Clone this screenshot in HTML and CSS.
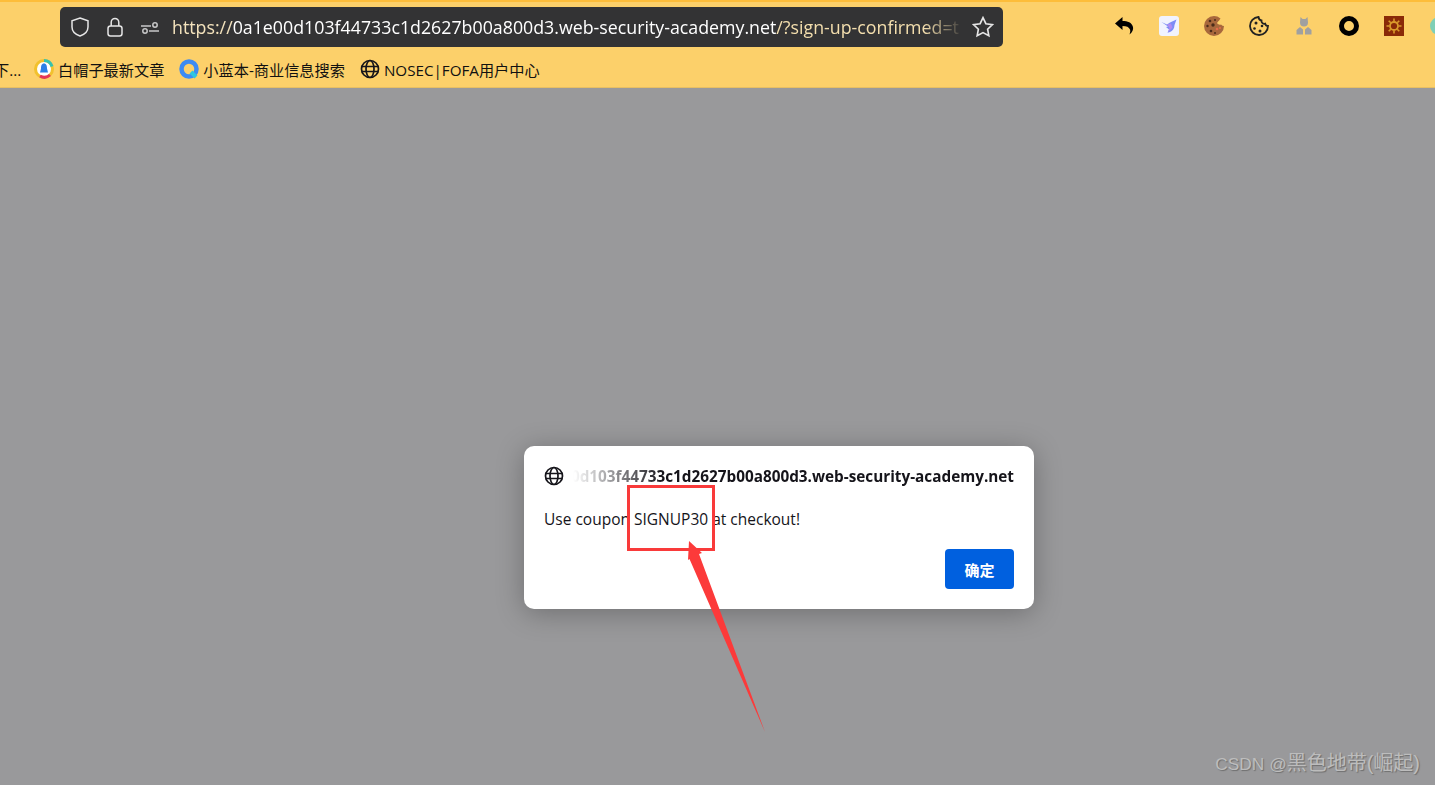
FILE: index.html
```html
<!DOCTYPE html>
<html>
<head>
    <meta charset="utf-8">
    <title>web-security-academy</title>
    <link rel="stylesheet" href="styles.css">
</head>
<body>
<div class="browser">
    <div class="toolbar">
        <div class="urlbar">
            <svg class="url-icon" viewBox="0 0 20 20"><path d="M10 1 18 3.800v6.200c0 4.300-3 7.300-8 9-5-1.700-8-4.700-8-9V3.800z"/></svg>
            <svg class="url-icon" viewBox="0 0 20 20"><rect x="3" y="9" width="14" height="10" rx="2.500"/><path d="M6.200 9V5.200a3.800 3.800 0 0 1 7.600 0V9"/></svg>
            <svg class="url-icon tune" viewBox="0 0 20 20"><circle cx="5" cy="14" r="2.200"/><path d="M9 14h10"/><circle cx="15" cy="8" r="2.200"/><path d="M1 9h10"/></svg>
            <div class="url-text"><span class="url-scheme">https://</span><span class="url-host">0a1e00d103f44733c1d2627b00a800d3.web-security-academy.net</span><span class="url-rest">/?sign-up-confirmed=t</span></div>
            <svg class="star" viewBox="0 0 20 20"><path d="M10 1.500 12.600 7l6 .8-4.400 4.200 1.100 6L10 15.100 4.700 18l1.100-6-4.400-4.200 6-.8z"/></svg>
        </div>
        <div class="extensions">
            <svg class="ext" viewBox="0 0 20 20"><path d="M8.500 1 1 7.500 8.500 14v-4c4 0 6.500 1 7.500 3.500.4 1 .4 2.500-.5 5 3-2.500 4-5 3.500-7.500C18 6.500 13.500 5 8.500 5z" fill="#000"/></svg>
            <svg class="ext" viewBox="0 0 20 20"><rect width="20" height="20" rx="3" fill="#f1f3fe"/><path d="M2.500 6 8 8.500 11 6.500 17.500 3.500 15.500 9c0 3.500-2 6-4.500 7l-2.500.8 1.500-3.300-3-2.500 2-.5z" fill="#7d8cf5"/><path d="M8 8.500 12 7.500 13.500 11.500 9 16l1.500-4z" fill="#b08cf2"/></svg>
            <svg class="ext" viewBox="0 0 20 20"><path d="M10 0a10 10 0 1 0 10 10c-1 0-2-.5-3-1.500-1.500.5-3 0-4-1.500 1.500-2 3-3.500 3.500-4.500C14.500.8 12.500 0 10 0z" fill="#a8683c"/><circle cx="6" cy="5" r="1.300" fill="#4a2c1a"/><circle cx="11" cy="4" r="1" fill="#4a2c1a"/><circle cx="3.500" cy="10" r="1.200" fill="#4a2c1a"/><circle cx="9" cy="9" r="1.700" fill="#4a2c1a"/><circle cx="13" cy="13" r="1.300" fill="#e46b4a"/><circle cx="16" cy="12" r="1" fill="#e46b4a"/><circle cx="7" cy="15" r="1.300" fill="#4a2c1a"/><circle cx="11" cy="17" r="1" fill="#4a2c1a"/></svg>
            <svg class="ext" viewBox="0 0 20 20"><path d="M9.500 1a9 9 0 1 0 9.500 9c-1.500 0-2.500-1-2.800-2.300-2.200.5-4-1-3.700-3.200C11 4.300 9.800 3 9.500 1z" fill="none" stroke="#222" stroke-width="1.800"/><circle cx="7" cy="7" r="1.500" fill="#222"/><circle cx="13" cy="10" r="1.300" fill="#222"/><circle cx="5.500" cy="12.500" r="1.300" fill="#222"/><circle cx="11" cy="15" r="1.500" fill="#222"/></svg>
            <svg class="ext" viewBox="0 0 20 20"><path d="M6.500 1 8.500 3h3l2-2 .5 5.500a4 4 0 0 1-8 0z" fill="#a0a0a0"/><path d="M2.500 18.500V14L6 11l3 2.500v5zM17.500 18.500V14L14 11l-3 2.500v5z" fill="#a0a0a0"/></svg>
            <svg class="ext" viewBox="0 0 20 20"><circle cx="10" cy="10" r="7.500" fill="none" stroke="#000" stroke-width="5"/></svg>
            <svg class="ext" viewBox="0 0 20 20"><rect width="20" height="20" fill="#8a2a08"/><circle cx="10" cy="10" r="4" fill="none" stroke="#d99a2b" stroke-width="1.800"/><path d="M10 2.500v3M10 14.500v3M2.500 10h3M14.500 10h3M4.700 4.700l2.100 2.100M13.200 13.200l2.100 2.100M4.700 15.300l2.100-2.100M13.200 6.800l2.100-2.100" stroke="#d99a2b" stroke-width="1.600"/></svg>
            <svg class="ext" viewBox="0 0 20 20"><circle cx="10" cy="10" r="9" fill="#7fcfb6"/></svg>
        </div>
    </div>
    <div class="bookmarks">
        <span class="bookmark cut">下...</span>
        <span class="bookmark">
            <svg class="fav" viewBox="0 0 20 20"><circle cx="10" cy="10" r="8.500" fill="#fff" stroke="#f2c12e" stroke-width="3"/><path d="M10 1.500a8.500 8.500 0 0 1 8 6" fill="none" stroke="#35c2b0" stroke-width="3"/><path d="M16 16a8.500 8.500 0 0 1-10 1" fill="none" stroke="#e5355a" stroke-width="3"/><path d="M10 4.500c2.500 0 3 2.500 3 5l1 4H6l1-4c0-2.500.5-5 3-5z" fill="#2b7fe6"/></svg>
            白帽子最新文章
        </span>
        <span class="bookmark">
            <svg class="fav" viewBox="0 0 20 20"><circle cx="10" cy="10" r="7.500" fill="none" stroke="#3d8bf2" stroke-width="4.500"/><path d="M12 13l5 5" stroke="#2fc6e0" stroke-width="4"/></svg>
            小蓝本-商业信息搜索
        </span>
        <span class="bookmark">
            <svg class="fav globe" viewBox="0 0 20 20"><circle cx="10" cy="10" r="8.500"/><ellipse cx="10" cy="10" rx="4" ry="8.500"/><path d="M1.500 7.500h17M1.500 12.500h17"/></svg>
            NOSEC|FOFA用户中心
        </span>
    </div>
</div>
<div class="content">
    <div class="dialog">
        <div class="dialog-head">
            <svg class="globe" viewBox="0 0 20 20"><circle cx="10" cy="10" r="8.500"/><ellipse cx="10" cy="10" rx="4" ry="8.500"/><path d="M1.500 7.500h17M1.500 12.500h17"/></svg>
            <div class="dialog-host"><span>0a1e00d103f44733c1d2627b00a800d3.web-security-academy.net</span></div>
        </div>
        <p class="dialog-msg">Use coupon SIGNUP30 at checkout!</p>
        <div class="dialog-foot"><button class="ok-btn">确定</button></div>
    </div>
    <div class="mark-box"></div>
    <svg class="mark-arrow" viewBox="0 0 90 200"><polygon points="9,1 22,13 19,14 85,192 9.500,19 8,20" fill="#fc3a3a"/></svg>
    <div class="watermark"><span class="wm-name">CSDN @</span>黑色地带(崛起)</div>
</div>
</body>
</html>
```

FILE: styles.css
```css
* {
    margin: 0;
    padding: 0;
    box-sizing: border-box;
}
html, body {
    height: 100%;
    overflow: hidden;
}
body {
    font-family: "Open Sans", "Noto Sans CJK SC", sans-serif;
    background: #99999b;
    display: flex;
    flex-direction: column;
}
.browser {
    background: #fcd06a;
    border-top: 2px solid #fdbd3a;
    border-bottom: 1px solid #e8bf62;
    height: 88px;
    flex-shrink: 0;
}
.toolbar {
    height: 51px;
    padding-left: 60px;
    display: flex;
    align-items: center;
    overflow: hidden;
}
.urlbar {
    width: 943px;
    height: 40px;
    flex-shrink: 0;
    margin-top: -1px;
    background: #333334;
    border-radius: 5px;
    padding: 0 9px 0 10px;
    display: flex;
    align-items: center;
    gap: 15px;
}
.url-icon {
    width: 20px;
    height: 20px;
    flex-shrink: 0;
    fill: none;
    stroke: #e6e6e6;
    stroke-width: 1.500;
}
.url-icon.tune {
    stroke: #c8c8c8;
}
.url-text {
    flex: 1;
    min-width: 0;
    margin-left: -3px;
    font-size: 17.800px;
    white-space: nowrap;
    overflow: hidden;
    color: #f4dfae;
    -webkit-mask-image: linear-gradient(to left, transparent 0, #000 40px);
    mask-image: linear-gradient(to left, transparent 0, #000 40px);
}
.url-scheme {
    color: #f4e3bd;
}
.url-host {
    color: #fff;
}
.star {
    width: 22px;
    height: 22px;
    flex-shrink: 0;
    margin-left: -7px;
    fill: none;
    stroke: #e6e6e6;
    stroke-width: 1.500;
}
.extensions {
    display: flex;
    gap: 25px;
    margin-left: 111px;
    margin-top: -3px;
}
.ext {
    width: 20px;
    height: 20px;
    flex-shrink: 0;
}
.bookmarks {
    height: 33px;
    padding-bottom: 1px;
    display: flex;
    align-items: center;
    gap: 15px;
    font-size: 15.200px;
    color: #111;
    overflow: hidden;
}
.bookmark {
    display: flex;
    align-items: center;
    gap: 4px;
    white-space: nowrap;
}
.bookmark.cut {
    margin-left: -6px;
    width: 25px;
}
.fav {
    width: 20px;
    height: 20px;
}
.globe {
    width: 20px;
    height: 20px;
    flex-shrink: 0;
    fill: none;
    stroke: #15141a;
    stroke-width: 1.700;
}
.content {
    flex: 1;
    position: relative;
    padding: 358px 0 0 524px;
}
.dialog {
    width: 510px;
    height: 163px;
    background: #fff;
    border-radius: 10px;
    box-shadow: 0 4px 28px rgba(0, 0, 0, 0.28);
    padding: 20px;
    color: #15141a;
}
.dialog-head {
    display: flex;
    align-items: center;
    gap: 9px;
}
.dialog-host {
    flex: 1;
    min-width: 0;
    display: flex;
    justify-content: flex-end;
    overflow: hidden;
    white-space: nowrap;
    font-size: 15.300px;
    font-weight: 700;
    -webkit-mask-image: linear-gradient(to right, transparent 0, #000 90px);
    mask-image: linear-gradient(to right, transparent 0, #000 90px);
}
.dialog-host span {
    flex-shrink: 0;
}
.dialog-msg {
    margin-top: 23px;
    font-size: 15.500px;
    line-height: 20px;
}
.dialog-foot {
    margin-top: 20px;
    display: flex;
    justify-content: flex-end;
}
.ok-btn {
    width: 69px;
    height: 40px;
    border: none;
    border-radius: 4px;
    background: #0060df;
    color: #fff;
    font-family: inherit;
    font-size: 15px;
    font-weight: 700;
}
.mark-box {
    position: absolute;
    left: 627px;
    top: 397px;
    width: 88px;
    height: 66px;
    border: 3px solid #f93a3a;
}
.mark-arrow {
    position: absolute;
    left: 680px;
    top: 452px;
    width: 90px;
    height: 200px;
}
.watermark {
    position: absolute;
    right: 15px;
    bottom: 9px;
    font-size: 20px;
    color: #bdbdbd;
    text-shadow: 1px 1px 1px #6e6e6e;
    font-family: "Liberation Sans", "Noto Sans CJK SC", sans-serif;
}
.wm-name {
    font-size: 17.300px;
}
```
